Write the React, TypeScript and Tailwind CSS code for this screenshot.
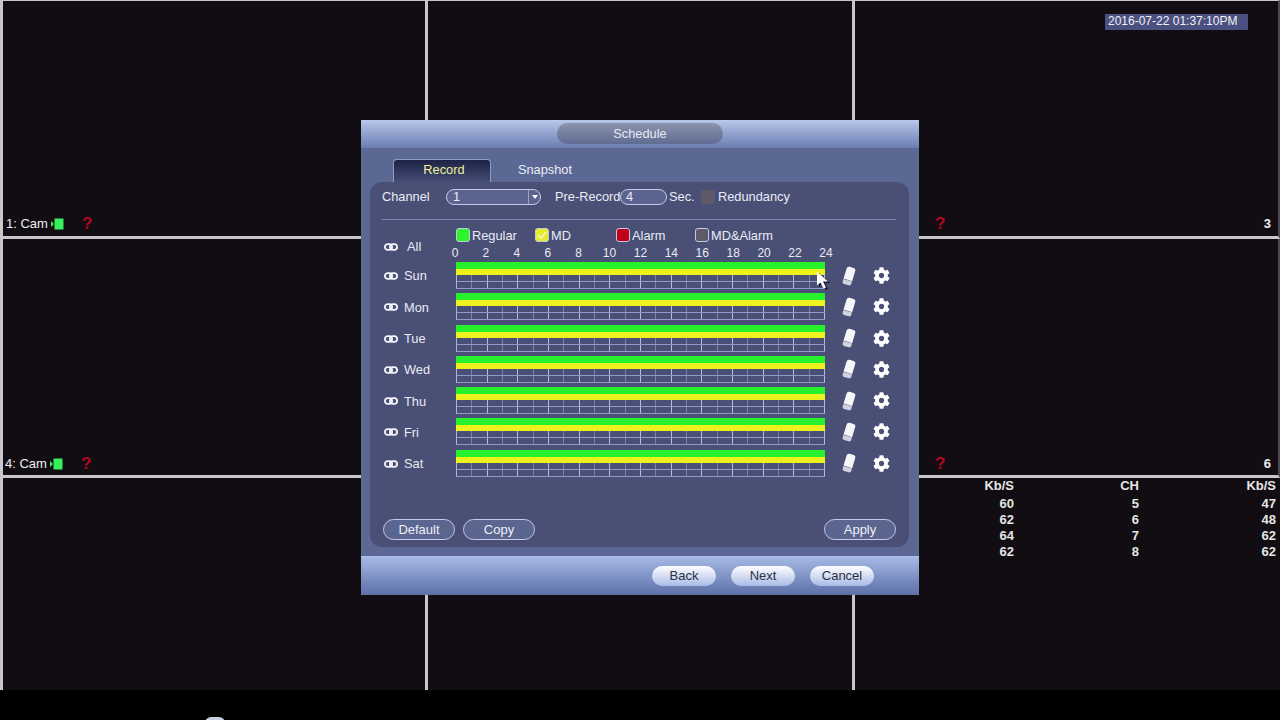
import { FaCog } from "react-icons/fa";

const DAYS = ["Sun", "Mon", "Tue", "Wed", "Thu", "Fri", "Sat"];
const HOURS = [0, 2, 4, 6, 8, 10, 12, 14, 16, 18, 20, 22, 24];
const STATS = [
  ["60", "5", "47"],
  ["62", "6", "48"],
  ["64", "7", "62"],
  ["62", "8", "62"],
];

function LinkIcon() {
  return (
    <svg width="14" height="8" viewBox="0 0 14 8" fill="none" stroke="#f4f5fa" strokeWidth="1.8" className="shrink-0">
      <rect x="0.9" y="1.1" width="7.2" height="5.8" rx="2.9" />
      <rect x="5.9" y="1.1" width="7.2" height="5.8" rx="2.9" />
    </svg>
  );
}

function EraserIcon() {
  return (
    <svg width="14" height="20" viewBox="0 0 14 20" className="shrink-0">
      <g transform="rotate(17 7 10)">
        <path d="M2.5 3.5 Q2.5 1 5 1 H9 Q11.5 1 11.5 3.5 V14 H2.5 Z" fill="#f6f6f8" />
        <path d="M2.5 14.5 H11.5 V17 Q11.5 19 9.5 19 H4.5 Q2.5 19 2.5 17 Z" fill="#d0d3de" />
      </g>
    </svg>
  );
}

function Cursor() {
  return (
    <svg width="16" height="20" viewBox="0 0 16 20" className="absolute left-[455px] top-[151px]">
      <path d="M3 2 L3 16 L6.5 13 L9.5 19 L12 18 L9 12 L14 12 Z" fill="#14142e" />
      <path d="M1 0.5 L1 14.5 L4.5 11.5 L7.5 17.5 L10 16.5 L7 10.5 L12 10.5 Z" fill="#ffffff" />
    </svg>
  );
}

function HourCells({ height }: { height: string }) {
  return (
    <div className={`flex ${height} border-b border-[#8f9ccb]`}>
      {Array.from({ length: 24 }, (_, i) => (
        <div
          key={i}
          className={`flex-1 border-r ${i % 2 === 1 ? "border-[#b4bde0]" : "border-[#7482b4]"}`}
        />
      ))}
    </div>
  );
}

function DayRow({ day }: { day: string }) {
  return (
    <div className="flex h-[27px] items-center">
      <div className="flex w-[74px] items-center pl-[2px] pt-[1px]">
        <LinkIcon />
        <span className="ml-[6px]">{day}</span>
      </div>
      <div className="w-[369px] shrink-0">
        <div className="h-[7px] bg-[#27f02c]" />
        <div className="h-[6px] bg-[#eef21c]" />
        <div className="border-l border-[#aab4da]">
          <HourCells height="h-[7px]" />
          <HourCells height="h-[7px]" />
        </div>
      </div>
      <div className="ml-[17px] flex items-center gap-[17px]">
        <EraserIcon />
        <FaCog className="h-[17px] w-[17px] text-white" />
      </div>
    </div>
  );
}

function Swatch({ color, checked }: { color: string; checked?: boolean }) {
  return (
    <span className={`flex h-[14px] w-[14px] shrink-0 items-center justify-center rounded-[3px] border border-[#c4cbe0] ${color}`}>
      {checked && (
        <svg width="10" height="8" viewBox="0 0 10 8" fill="none" stroke="#f4f6d8" strokeWidth="1.6">
          <path d="M1 4 L4 7 L9 1" />
        </svg>
      )}
    </span>
  );
}

function PanelButton({ label }: { label: string }) {
  return (
    <button className="h-[21px] w-[72px] rounded-full border-[1.5px] border-[#c3cbe8] bg-[#5a6590] text-[13px] text-[#eef0f6]">
      {label}
    </button>
  );
}

function FooterButton({ label }: { label: string }) {
  return (
    <button className="h-[20px] w-[64px] rounded-full bg-gradient-to-b from-white to-[#a9bbe6] text-[13px] text-[#2c3040]">
      {label}
    </button>
  );
}

function Question({ left }: { left: string }) {
  return <span className={`${left} text-[17px] font-bold leading-[16px] text-[#b4061e]`}>?</span>;
}

function CamLabel({ label }: { label: string }) {
  return (
    <div className="flex h-[16px] items-center text-[13px] text-[#eeeeee]">
      <span className="w-[45px]">{label}</span>
      <svg width="13" height="12" viewBox="0 0 13 12" className="shrink-0">
        <path d="M0 3 L3 6 L0 9 Z" fill="#3ff05a" />
        <rect x="3.5" y="0.5" width="9" height="11" fill="#36f060" />
      </svg>
      <Question left="ml-[18px]" />
    </div>
  );
}

export default function App() {
  return (
    <div className="relative h-[720px] w-[1280px] overflow-hidden bg-black font-['Liberation_Sans',sans-serif]">
      {/* camera wall */}
      <div className="grid h-[690px] grid-cols-[425px_427px_428px] grid-rows-[239px_239px_212px] bg-[#110d12]">
        <div className="flex items-end border-b-[3px] border-l-[3px] border-t border-[#c9c7c9] pb-[4px] pl-[3px]">
          <CamLabel label="1: Cam" />
        </div>
        <div className="border-b-[3px] border-l-[3px] border-t border-[#c9c7c9]" />
        <div className="flex flex-col justify-between border-b-[3px] border-l-[3px] border-r-2 border-t border-[#c9c7c9] border-r-[#4a484a] pb-[4px] pr-[7px]">
          <div className="ml-[250px] mt-[13px] h-[16px] w-[143px] bg-[#4a5080] pl-[3px] text-[12px] leading-[15px] text-[#f2f2f6]">
            2016-07-22 01:37:10PM
          </div>
          <div className="flex items-center justify-between text-[13px] font-bold leading-[16px] text-[#eeeeee]">
            <Question left="ml-[80px]" />
            <span>3</span>
          </div>
        </div>
        <div className="flex items-end border-b-[3px] border-l-[3px] border-[#c9c7c9] pb-[3px] pl-[2px]">
          <CamLabel label="4: Cam" />
        </div>
        <div className="border-b-[3px] border-l-[3px] border-[#c9c7c9]" />
        <div className="flex items-end justify-between border-b-[3px] border-l-[3px] border-r-2 border-[#c9c7c9] border-r-[#4a484a] pb-[3px] pr-[7px] text-[13px] font-bold leading-[16px] text-[#eeeeee]">
          <Question left="ml-[80px]" />
          <span>6</span>
        </div>
        <div className="border-l-[3px] border-[#c9c7c9]" />
        <div className="border-l-[3px] border-[#c9c7c9]" />
        <div className="border-l-[3px] border-[#c9c7c9] text-[13px] font-bold leading-[16px] text-[#e6e6e6]">
          <div className="grid grid-cols-[156px_125px_137px] justify-items-end pl-[3px]">
            <span className="mb-[2px]">Kb/S</span>
            <span className="mb-[2px]">CH</span>
            <span className="mb-[2px]">Kb/S</span>
            {STATS.flat().map((value, i) => (
              <span key={i}>{value}</span>
            ))}
          </div>
        </div>
      </div>

      {/* bit of the desktop showing below the wall */}
      <div className="absolute left-[205px] top-[717px] h-[12px] w-[20px] rounded-full bg-[#c8d0e0]" />

      {/* dialog */}
      <div className="absolute left-[361px] top-[120px] flex h-[475px] w-[558px] flex-col bg-[#5c6894] text-[12.8px] text-[#e9ecf4]">
        <div className="flex h-[28px] shrink-0 items-start justify-center bg-gradient-to-b from-[#b9c7ea] to-[#6c7db2] pt-[3px]">
          <div className="flex h-[21px] w-[166px] items-center justify-center rounded-full bg-gradient-to-b from-[#8b94ae] to-[#5f6c92] text-[#e6e9f2]">
            Schedule
          </div>
        </div>

        <div className="flex flex-1 flex-col px-[9px]">
          <div className="flex h-[34px] shrink-0 items-end pl-[23px]">
            <div className="flex h-[23px] w-[98px] items-center justify-center rounded-t-[4px] border border-b-0 border-[#8e9cc6] bg-gradient-to-b from-[#1c2346] to-[#464d76] pb-[2px] pl-[4px] text-[#f2f098]">
              Record
            </div>
            <div className="flex h-[23px] w-[108px] items-center justify-center pb-[2px]">Snapshot</div>
          </div>

          <div className="flex h-[365px] w-[539px] flex-col rounded-[12px] bg-[#4a4f76] px-[12px]">
            <div className="mt-[7px] flex h-[16px] shrink-0 items-center whitespace-nowrap">
              <span className="w-[64px]">Channel</span>
              <div className="flex h-[16px] w-[95px] items-center rounded-full border border-[#c3cbe8] bg-[#5b6490] pl-[6px]">
                <span className="flex-1">1</span>
                <span className="flex h-full w-[12px] items-center justify-center border-l border-[#9aa4c8]">
                  <span className="h-0 w-0 border-x-[3px] border-t-[4px] border-x-transparent border-t-white" />
                </span>
              </div>
              <span className="ml-[14px] w-[65px]">Pre-Record</span>
              <div className="flex h-[16px] w-[47px] items-center rounded-full border border-[#c3cbe8] bg-[#5b6490] pl-[5px]">4</div>
              <span className="ml-[2px] w-[24px]">Sec.</span>
              <span className="ml-[8px] h-[14px] w-[14px] rounded-[2px] bg-[#5f5a6a]" />
              <span className="ml-[3px]">Redundancy</span>
            </div>

            <div className="mt-[14px] h-px w-[514px] shrink-0 bg-[#7e88b0]" />

            <div className="flex h-[42px] shrink-0">
              <div className="flex h-full w-[74px] items-center pl-[2px] pt-[12px]">
                <LinkIcon />
                <span className="ml-[9px]">All</span>
              </div>
              <div className="flex w-[370px] flex-col">
                <div className="mt-[8px] flex h-[14px] items-center whitespace-nowrap">
                  <div className="flex w-[79px] items-center gap-[2px]"><Swatch color="bg-[#2cf52c]" /><span className="pt-px">Regular</span></div>
                  <div className="flex w-[81px] items-center gap-[2px]"><Swatch color="bg-[#e6ec2c]" checked /><span className="pt-px">MD</span></div>
                  <div className="flex w-[79px] items-center gap-[2px]"><Swatch color="bg-[#c00018]" /><span className="pt-px">Alarm</span></div>
                  <div className="flex items-center gap-[2px]"><Swatch color="bg-[#5f5a6a]" /><span className="pt-px">MD&amp;Alarm</span></div>
                </div>
                <div className="-ml-px mt-[2px] flex h-[14px] justify-between text-[12px]">
                  {HOURS.map((h) => (
                    <span key={h} className="flex w-0 justify-center">{h}</span>
                  ))}
                </div>
              </div>
            </div>

            <div className="flex shrink-0 flex-col gap-[4.3px]">
              {DAYS.map((d) => (
                <DayRow key={d} day={d} />
              ))}
            </div>

            <div className="mb-[7px] mt-auto flex items-center gap-[8px] pl-px pr-px">
              <PanelButton label="Default" />
              <PanelButton label="Copy" />
              <div className="ml-auto">
                <PanelButton label="Apply" />
              </div>
            </div>
          </div>
        </div>

        <div className="flex h-[39px] shrink-0 items-center justify-end gap-[15px] bg-gradient-to-b from-[#a9bbe6] to-[#5d70a8] pr-[45px]">
          <FooterButton label="Back" />
          <FooterButton label="Next" />
          <FooterButton label="Cancel" />
        </div>

        <Cursor />
      </div>
    </div>
  );
}
